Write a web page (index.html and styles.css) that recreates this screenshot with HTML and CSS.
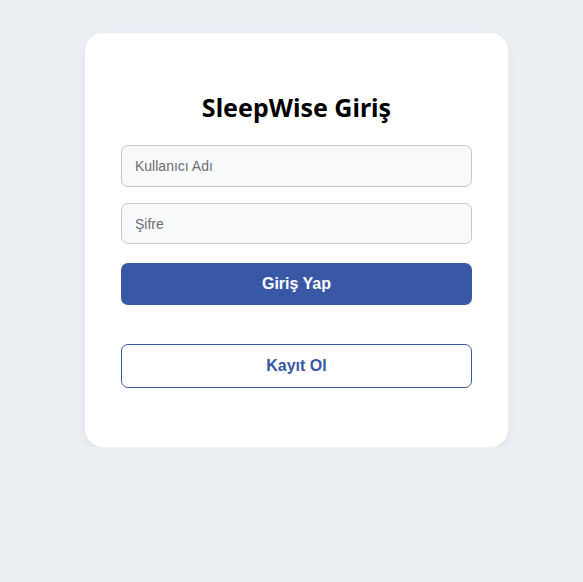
FILE: index.html
```html
<!DOCTYPE html>
<html lang="tr">
<head>
<meta charset="utf-8">
<title>SleepWise Giriş</title>
<link rel="stylesheet" href="styles.css">
</head>
<body>
<main class="card">
  <h2 class="title">SleepWise Giriş</h2>
  <form class="form">
    <input class="field" type="text" placeholder="Kullanıcı Adı">
    <input class="field field-pass" type="password" placeholder="Şifre">
    <button class="btn btn-primary" type="button">Giriş Yap</button>
  </form>
  <button class="btn btn-outline" type="button">Kayıt Ol</button>
</main>
</body>
</html>
```
FILE: styles.css
```css
html, body {
  margin: 0;
  padding: 0;
  background: #eceff4;
}
body {
  padding-top: 33px;
  font-family: "Liberation Sans", Arial, sans-serif;
}
.card {
  box-sizing: border-box;
  width: 423px;
  margin-left: 85px;
  padding: 58px 36px 59px;
  background: #ffffff;
  border-radius: 18px;
  box-shadow: 0 4px 14px rgba(40, 50, 80, 0.06);
}
.title {
  margin: 0 0 22px;
  text-align: center;
  font-family: "Noto Sans", "Open Sans", sans-serif;
  font-weight: 700;
  font-size: 25px;
  line-height: 32px;
  color: #000;
}
.form {
  display: flex;
  flex-direction: column;
  margin: 0;
}
.field {
  box-sizing: border-box;
  width: 100%;
  height: 42px;
  padding: 0 13px;
  border: 1px solid #c3c7ce;
  border-radius: 7px;
  background: #f8f9fb;
  font-family: "Liberation Sans", Arial, sans-serif;
  font-size: 14px;
  color: #333;
  outline: none;
}
.field::placeholder {
  color: #6b6f75;
}
.field-pass {
  margin-top: 16px;
  height: 41px;
}
.btn {
  box-sizing: border-box;
  display: block;
  width: 100%;
  border-radius: 7px;
  font-family: "Liberation Sans", Arial, sans-serif;
  font-weight: 700;
  font-size: 16px;
  cursor: pointer;
}
.btn-primary {
  margin-top: 19px;
  height: 42px;
  border: none;
  background: #3858a6;
  color: #ffffff;
}
.btn-outline {
  margin-top: 39px;
  height: 44px;
  border: 1px solid #3858a6;
  background: #ffffff;
  color: #3858a6;
}
```
